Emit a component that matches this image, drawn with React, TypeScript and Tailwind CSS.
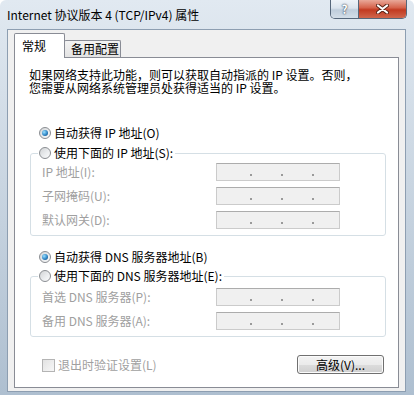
import React from "react";

function Radio({ checked }: { checked?: boolean }) {
  return (
    <span className="flex h-[12px] w-[12px] shrink-0 items-center justify-center rounded-full border border-[#8a8d92] bg-[linear-gradient(135deg,#d2d4d6_0%,#eceef0_60%,#fbfbfb_100%)]">
      {checked && (
        <span className="h-[6px] w-[6px] rounded-full bg-[radial-gradient(circle_at_35%_35%,#9be0ff_0%,#2f86c6_55%,#15406b_100%)]" />
      )}
    </span>
  );
}

function IpBox() {
  return (
    <div className="flex h-[18px] w-[124px] items-end border border-[#cbcbcb] border-t-[#acacac] bg-[#f0f0f0] pb-[4px] pl-[33px]">
      <span className="h-[2px] w-[2px] bg-[#9a9a9a]" />
      <span className="ml-[29px] h-[2px] w-[2px] bg-[#9a9a9a]" />
      <span className="ml-[29px] h-[2px] w-[2px] bg-[#9a9a9a]" />
    </div>
  );
}

function FieldRow({ label }: { label: string }) {
  return (
    <div className="flex h-[18px] items-center">
      <span className="w-[174px] leading-[18px] text-[#a0a0a0]">{label}</span>
      <IpBox />
    </div>
  );
}

export default function App() {
  return (
    <div className="flex h-[395px] w-[414px] flex-col overflow-hidden rounded-t-[6px] bg-[linear-gradient(180deg,#e1e9f1_0%,#cfdae5_35%,#aebfd0_100%)] pb-[3px] pl-[7px] pr-[8px] font-['Noto_Sans_CJK_SC',sans-serif] text-[12px] text-black">
      {/* Title bar */}
      <div className="flex h-[29px] shrink-0 items-start justify-between">
        <span className="mt-[7px] leading-[16px]">Internet 协议版本 4 (TCP/IPv4) 属性</span>
        <div className="-mr-[1px] flex h-[19px] overflow-hidden rounded-b-[5px] border border-t-0 border-[#56677a]">
          <div className="flex w-[28px] items-center justify-center border-r border-[#56677a] bg-[linear-gradient(180deg,#eef3f8_0%,#dbe4ed_45%,#bfcddb_55%,#d3dee8_100%)] text-[12px] font-bold leading-none text-white [text-shadow:0_0_2px_#3a4656,0_0_1px_#3a4656]">
            ?
          </div>
          <div className="flex w-[47px] items-center justify-center bg-[linear-gradient(180deg,#e9a899_0%,#d6644d_42%,#c23a21_55%,#d0664c_100%)]">
            <svg width="13" height="10" viewBox="0 0 13 10">
              <path d="M2 1.5 L11 8.5 M11 1.5 L2 8.5" stroke="#5a2418" strokeWidth="4" strokeLinecap="round" />
              <path d="M2 1.5 L11 8.5 M11 1.5 L2 8.5" stroke="#ffffff" strokeWidth="2.2" strokeLinecap="round" />
            </svg>
          </div>
        </div>
      </div>

      {/* Client area */}
      <div className="flex flex-1 flex-col border border-[#8d9eb1] bg-[#f0f0f0] px-[6px] pb-[3px]">
        {/* Tabs */}
        <div className="flex h-[27px] shrink-0 items-end">
          <div className="relative z-10 -mb-[1px] h-[25px] w-[51px] rounded-t-[2px] border border-b-0 border-[#898c95] bg-white pl-[7px] pt-[4px] leading-[16px]">
            常规
          </div>
          <div className="-ml-[1px] h-[17px] w-[57px] rounded-t-[2px] border border-b-0 border-[#898c95] bg-[linear-gradient(180deg,#f3f3f3,#e3e3e3)] pl-[6px] leading-[16px]">
            备用配置
          </div>
        </div>

        {/* Panel */}
        <div className="flex flex-1 flex-col border border-[#898c95] bg-white pl-[15px] pr-[12px]">
          <p className="-ml-[1px] mt-[10px] leading-[13px]">
            <span className="block whitespace-nowrap">如果网络支持此功能，则可以获取自动指派的 IP 设置。否则，</span>
            <span className="block whitespace-nowrap">您需要从网络系统管理员处获得适当的 IP 设置。</span>
          </p>

          <div className="ml-[9px] mt-[31px] flex h-[16px] items-center gap-[3px]">
            <Radio checked />
            <span className="leading-[16px]">自动获得 IP 地址(O)</span>
          </div>

          <fieldset className="mt-[4px] rounded-[3px] border border-[#d5dfe5] px-0 pb-[6px]">
            <legend className="ml-[7px] flex h-[16px] items-center gap-[3px] pl-[1px] pr-[2px]">
              <Radio />
              <span className="leading-[16px]">使用下面的 IP 地址(S):</span>
            </legend>
            <div className="mt-[2px] flex flex-col gap-[6px] pl-[11px]">
              <FieldRow label="IP 地址(I):" />
              <FieldRow label="子网掩码(U):" />
              <FieldRow label="默认网关(D):" />
            </div>
          </fieldset>

          <div className="ml-[9px] mt-[13px] flex h-[16px] items-center gap-[3px]">
            <Radio checked />
            <span className="leading-[16px]">自动获得 DNS 服务器地址(B)</span>
          </div>

          <fieldset className="mt-[3px] rounded-[3px] border border-[#d5dfe5] px-0 pb-[6px]">
            <legend className="ml-[7px] flex h-[16px] items-center gap-[3px] pl-[1px] pr-[2px]">
              <Radio />
              <span className="leading-[16px]">使用下面的 DNS 服务器地址(E):</span>
            </legend>
            <div className="mt-[4px] flex flex-col gap-[6px] pl-[11px]">
              <FieldRow label="首选 DNS 服务器(P):" />
              <FieldRow label="备用 DNS 服务器(A):" />
            </div>
          </fieldset>

          <div className="mt-[18px] flex items-start justify-between">
            <div className="ml-[12px] mt-[2px] flex items-center gap-[3px]">
              <span className="h-[13px] w-[13px] border border-[#b4b4b4] bg-[linear-gradient(135deg,#e2e2e2,#f7f7f7)]" />
              <span className="leading-[16px] text-[#a0a0a0]">退出时验证设置(L)</span>
            </div>
            <div className="mr-[2px] flex h-[19px] w-[87px] items-center justify-center rounded-[3px] border border-[#707070] bg-[linear-gradient(180deg,#f3f3f3_0%,#ebebeb_50%,#dddddd_50%,#cfcfcf_100%)] leading-[16px] shadow-[inset_0_0_0_1px_#fbfbfb]">
              高级(V)...
            </div>
          </div>
        </div>
      </div>
    </div>
  );
}
